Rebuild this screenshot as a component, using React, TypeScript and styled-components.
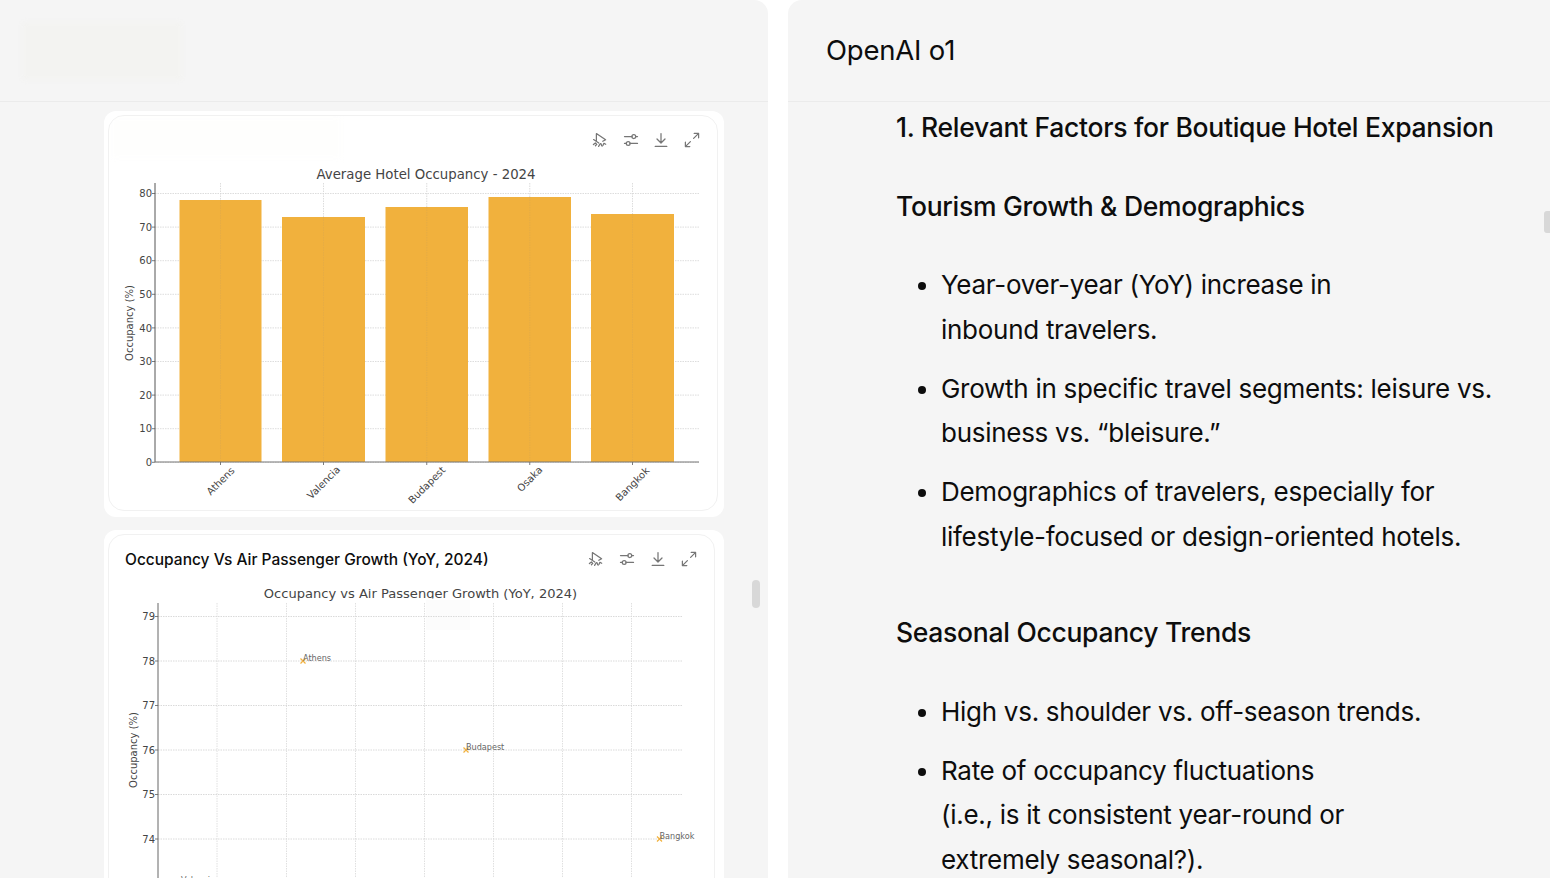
import React from 'react';
import styled, { createGlobalStyle } from 'styled-components';

const occupancy = [
  { city: 'Athens', x: 179.5, w: 82, top: 200, labelY: 481 },
  { city: 'Valencia', x: 282, w: 83, top: 217, labelY: 482.5 },
  { city: 'Budapest', x: 385.5, w: 82.5, top: 207, labelY: 485 },
  { city: 'Osaka', x: 488.5, w: 82.5, top: 197, labelY: 479 },
  { city: 'Bangkok', x: 591, w: 83, top: 214, labelY: 484 },
];
const barTicks = [80, 70, 60, 50, 40, 30, 20, 10, 0];
const scatterTicks = [79, 78, 77, 76, 75, 74];
const scatterGridX = [217, 286.5, 355.5, 424.5, 493.5, 562.5, 631.5];
const scatterPoints = [
  { city: 'Athens', x: 303, y: 661 },
  { city: 'Budapest', x: 466, y: 750 },
  { city: 'Bangkok', x: 659.5, y: 839 },
];

const ChartIcons = () => (
  <IconRow>
    <Icon viewBox="0 0 16 16">
      <path d="M4.4 1.6v7.2M4.4 1.6l9.2 6.2-2.8 1.5M1.6 7.6l5.2 3.4" />
      <path d="M1.4 12.6l2-1.6 1.4 1.4-1.4 1.4M6.6 14.4l1.4-2.4c.4-.7 1-.6 1.2.2l.3 1.2c.2.8 1 .8 1.4.1l1-2.2 1.8 1" />
    </Icon>
    <Icon viewBox="0 0 16 16">
      <path d="M1.5 4.6h7.6M12.6 4.6h1.9M1.5 11.4h1.9M6.9 11.4h7.6" />
      <circle cx="10.8" cy="4.6" r="1.9" />
      <circle cx="5.2" cy="11.4" r="1.9" />
    </Icon>
    <Icon viewBox="0 0 16 16">
      <path d="M8 1.5v9.4M4 7l4 4 4-4M2.2 14.4h11.6" />
    </Icon>
    <Icon viewBox="0 0 16 16">
      <path d="M9.6 6.4l5-5M10.2 1.4h4.4v4.4M6.4 9.6l-5 5M1.4 10.2v4.4h4.4" />
    </Icon>
  </IconRow>
);

const BarChart = () => (
  <ChartSvg $h={349} viewBox="109 161 608 349">
    {barTicks.map((t, i) => {
      const y = 193.5 + i * 33.6;
      return (
        <g key={t}>
          <line x1="155" x2="699" y1={y} y2={y} stroke="#d4d4d4" strokeWidth="0.8" strokeDasharray="1.5 1" />
          <line x1="152" x2="155" y1={y} y2={y} stroke="#444" strokeWidth="0.7" />
          <AxisText x="152" y={y + 3.6} textAnchor="end">{t}</AxisText>
        </g>
      );
    })}
    {occupancy.map((b) => (
      <rect key={b.city} x={b.x} y={b.top} width={b.w} height={462 - b.top} fill="#f1b13d" />
    ))}
    {occupancy.map((b) => {
      const cx = b.x + b.w / 2;
      return (
        <g key={b.city + '-grid'}>
          <line x1={cx} x2={cx} y1={b.top} y2="462" stroke="#c9a25c" strokeWidth="0.6" strokeOpacity="0.45" strokeDasharray="1.5 1" />
          <line x1={cx} x2={cx} y1="183" y2={b.top} stroke="#d4d4d4" strokeWidth="0.8" strokeDasharray="1.5 1" />
          <line x1={cx} x2={cx} y1="462" y2="465" stroke="#444" strokeWidth="0.7" />
          <AxisText x={cx} y={b.labelY} dy="0.35em" textAnchor="middle" transform={`rotate(-45 ${cx} ${b.labelY})`}>{b.city}</AxisText>
        </g>
      );
    })}
    <line x1="155" x2="155" y1="183" y2="462" stroke="#555" strokeWidth="1" />
    <line x1="155" x2="699" y1="462" y2="462" stroke="#777" strokeWidth="1" />
    <AxisText x="129" y="323" dy="0.35em" textAnchor="middle" transform="rotate(-90 129 323)">Occupancy (%)</AxisText>
    <TitleText $size={13.3} x="426" y="178.5" textAnchor="middle">Average Hotel Occupancy - 2024</TitleText>
  </ChartSvg>
);

const ScatterChart = () => (
  <ChartSvg $h={320} viewBox="109 580 604.5 320">
    <TitleText $size={13.05} x="420.5" y="597.5" textAnchor="middle">Occupancy vs Air Passenger Growth (YoY, 2024)</TitleText>
    <rect x="352" y="598.5" width="120" height="6" fill="#fff" />
    <rect x="426" y="600" width="44" height="30" fill="#fcfcfc" />
    {scatterTicks.map((t, i) => {
      const y = 616.5 + i * 44.5;
      return (
        <g key={t}>
          <line x1="158" x2="683" y1={y} y2={y} stroke="#d0d0d0" strokeWidth="0.8" strokeDasharray="1.5 1" />
          <line x1="155" x2="158" y1={y} y2={y} stroke="#444" strokeWidth="0.7" />
          <AxisText x="155" y={y + 3.6} textAnchor="end">{t}</AxisText>
        </g>
      );
    })}
    {scatterGridX.map((x) => (
      <line key={x} x1={x} x2={x} y1="603" y2="900" stroke="#d8d8d8" strokeWidth="0.8" strokeDasharray="1.5 1" />
    ))}
    <line x1="158" x2="158" y1="603" y2="900" stroke="#666" strokeWidth="1" />
    <AxisText x="133" y="750" dy="0.35em" textAnchor="middle" transform="rotate(-90 133 750)">Occupancy (%)</AxisText>
    {scatterPoints.map((p) => (
      <g key={p.city}>
        <path
          d={`M${p.x - 2.5} ${p.y - 2.5}l5 5M${p.x + 2.5} ${p.y - 2.5}l-5 5`}
          stroke="#f1b13d"
          strokeWidth="1.2"
        />
        <PointText x={p.x} y={p.y - 0.5}>{p.city}</PointText>
      </g>
    ))}
    <PointText x="181" y="883">Valencia</PointText>
  </ChartSvg>
);

const App = () => (
  <Page>
    <GlobalStyle />
    <LeftPanel>
      <PanelHeader>
        <BlurredName />
      </PanelHeader>
      <ChartList>
        <Card $gap={6} $bottom={6}>
          <CardInner>
            <CardHead>
              <BlurredTitle />
              <ChartIcons />
            </CardHead>
            <BarChart />
          </CardInner>
        </Card>
        <Card $gap={9.5} $bottom={0}>
          <CardInner>
            <CardHead>
              <CardTitle>Occupancy Vs Air Passenger Growth (YoY, 2024)</CardTitle>
              <ChartIcons />
            </CardHead>
            <ScatterChart />
          </CardInner>
        </Card>
      </ChartList>
      <ScrollThumbLeft />
    </LeftPanel>
    <RightPanel>
      <PanelHeader>
        <ModelName>OpenAI o1</ModelName>
      </PanelHeader>
      <Article>
        <SectionTitle>1. Relevant Factors for Boutique Hotel Expansion</SectionTitle>
        <SubTitle>Tourism Growth &amp; Demographics</SubTitle>
        <BulletList>
          <li>Year-over-year (YoY) increase in<br />inbound travelers.</li>
          <li>Growth in specific travel segments: leisure vs.<br />business vs. “bleisure.”</li>
          <li>Demographics of travelers, especially for<br />lifestyle-focused or design-oriented hotels.</li>
        </BulletList>
        <SubTitle>Seasonal Occupancy Trends</SubTitle>
        <BulletList>
          <li>High vs. shoulder vs. off-season trends.</li>
          <li>Rate of occupancy fluctuations<br />(i.e., is it consistent year-round or<br />extremely seasonal?).</li>
        </BulletList>
      </Article>
      <ScrollThumbRight />
    </RightPanel>
  </Page>
);

const GlobalStyle = createGlobalStyle`
  html, body {
    margin: 0;
    background: #fff;
    overflow: hidden;
  }
  * {
    box-sizing: border-box;
  }
`;
const Page = styled.div`
  display: flex;
  gap: 20px;
  width: 1550px;
  height: 878px;
  overflow: hidden;
  font-family: Inter, "Liberation Sans", sans-serif;
  color: #0d0d0d;
`;
const LeftPanel = styled.section`
  position: relative;
  width: 768px;
  height: 100%;
  overflow: hidden;
  background: #f5f5f5;
  border-top-right-radius: 14px;
`;
const RightPanel = styled.section`
  position: relative;
  flex: 1;
  height: 100%;
  overflow: hidden;
  background: #f5f5f5;
  border-top-left-radius: 14px;
`;
const PanelHeader = styled.header`
  display: flex;
  align-items: center;
  height: 102px;
  padding-left: 22px;
  border-bottom: 1px solid #ebebeb;
`;
const BlurredName = styled.div`
  width: 160px;
  height: 58px;
  margin-top: 1px;
  background: #f3f3f1;
  border-radius: 3px;
  filter: blur(2px);
`;
const ModelName = styled.h1`
  margin: 0 0 2px 16px;
  font-size: 27.5px;
  font-weight: 400;
  letter-spacing: -0.2px;
`;
const ChartList = styled.div`
  display: flex;
  flex-direction: column;
  gap: 13px;
  width: 620px;
  margin-left: 104px;
  padding-top: 9px;
`;
const Card = styled.article<{ $gap: number; $bottom: number }>`
  padding: 4px ${({ $gap }) => $gap}px ${({ $bottom }) => $bottom}px 4px;
  background: #fff;
  border-radius: 12px;
`;
const CardInner = styled.div`
  border: 1px solid #f1f1f1;
  border-radius: 16px;
  overflow: hidden;
`;
const CardHead = styled.div`
  position: relative;
  display: flex;
  align-items: center;
  justify-content: space-between;
  height: 45px;
  padding: 2px 17px 0 16px;
`;
const BlurredTitle = styled.div`
  position: absolute;
  top: 2px;
  left: 2px;
  width: 230px;
  height: 40px;
  background: #fefefd;
  filter: blur(3px);
`;
const CardTitle = styled.h3`
  margin: 2px 0 0;
  font-size: 15.5px;
  font-weight: 500;
  white-space: nowrap;
`;
const IconRow = styled.div`
  display: flex;
  gap: 14.7px;
  margin-left: auto;
`;
const Icon = styled.svg`
  display: block;
  width: 16px;
  height: 16px;
  fill: none;
  stroke: #767676;
  stroke-width: 1.25;
  stroke-linecap: round;
  stroke-linejoin: round;
`;
const ChartSvg = styled.svg<{ $h: number }>`
  display: block;
  width: 100%;
  height: ${({ $h }) => $h}px;
`;
const AxisText = styled.text`
  font-family: "DejaVu Sans", sans-serif;
  font-size: 10px;
  fill: #444;
`;
const TitleText = styled.text<{ $size: number }>`
  font-family: "DejaVu Sans", sans-serif;
  font-size: ${({ $size }) => $size}px;
  fill: #444;
`;
const PointText = styled.text`
  font-family: "DejaVu Sans", sans-serif;
  font-size: 8.1px;
  fill: #666;
`;
const Article = styled.div`
  padding: 2.5px 0 0 108px;
  font-size: 26px;
  letter-spacing: -0.28px;
  line-height: 44.5px;
  white-space: nowrap;
`;
const SectionTitle = styled.h2`
  margin: 0;
  font: inherit;
  font-size: 26.5px;
  letter-spacing: -0.29px;
  font-weight: 500;
`;
const SubTitle = styled.h3`
  margin: 34.5px 0 0;
  font: inherit;
  font-size: 26.5px;
  letter-spacing: -0.29px;
  font-weight: 500;
  & + ul {
    margin-top: 35px;
  }
`;
const BulletList = styled.ul`
  margin: 0 0 51px;
  padding: 0 0 0 45px;
  li + li {
    margin-top: 14.5px;
  }
`;
const ScrollThumbLeft = styled.div`
  position: absolute;
  top: 580px;
  left: 752px;
  width: 8px;
  height: 28px;
  background: #d8d8d8;
  border-radius: 4px;
`;
const ScrollThumbRight = styled.div`
  position: absolute;
  top: 211px;
  right: 0;
  width: 6px;
  height: 22px;
  background: #d8d8d8;
  border-radius: 3px 0 0 3px;
`;

export default App;
